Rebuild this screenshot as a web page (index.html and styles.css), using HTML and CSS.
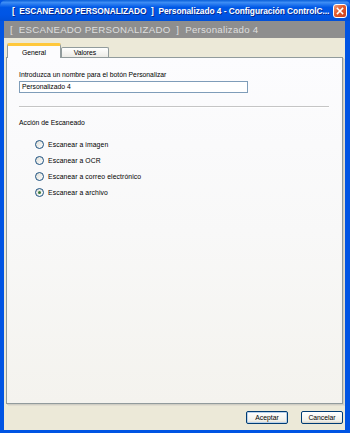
FILE: index.html
```html
<!DOCTYPE html>
<html lang="es">
<head>
<meta charset="utf-8">
<title>Configuración</title>
<link rel="stylesheet" href="styles.css">
</head>
<body>
<div class="window">
  <div class="titlebar">
    <span class="title">[&nbsp; ESCANEADO PERSONALIZADO &nbsp;]&nbsp; Personalizado 4 - Configuración ControlC...</span>
    <span class="close"><svg width="14" height="14" viewBox="0 0 14 14"><path d="M4 4 L10 10 M10 4 L4 10" stroke="#fff" stroke-width="1.8" stroke-linecap="square"/></svg></span>
  </div>
  <div class="frame">
    <div class="header">[&nbsp; ESCANEADO PERSONALIZADO &nbsp;]&nbsp; Personalizado 4</div>
    <div class="body">
      <div class="tabs">
        <div class="tab active">General</div>
        <div class="tab">Valores</div>
      </div>
      <div class="panel">
        <div class="label">Introduzca un nombre para el botón Personalizar</div>
        <div class="input">Personalizado 4</div>
        <div class="sep"></div>
        <div class="label group">Acción de Escaneado</div>
        <div class="radios">
          <div class="radio"><span class="dot"></span>Escanear a imagen</div>
          <div class="radio"><span class="dot"></span>Escanear a OCR</div>
          <div class="radio"><span class="dot"></span>Escanear a correo electrónico</div>
          <div class="radio"><span class="dot on"></span>Escanear a archivo</div>
        </div>
      </div>
      <div class="buttons">
        <div class="btn">Aceptar</div>
        <div class="btn">Cancelar</div>
      </div>
    </div>
  </div>
</div>
</body>
</html>
```
FILE: styles.css
```css
html, body { margin: 0; padding: 0; }
body { width: 350px; height: 433px; overflow: hidden; font-family: "Liberation Sans", Arial, sans-serif; }
.window { width: 350px; height: 433px; display: flex; flex-direction: column; background: #0054e3; }
.titlebar {
  height: 21px; flex: none; display: flex; align-items: center; justify-content: space-between;
  padding: 0 3px 0 12px;
  background: linear-gradient(to bottom, #0a5fd8 0%, #3d8df5 12%, #0058e6 35%, #0055e5 70%, #0050d8 100%);
  border-radius: 6px 6px 0 0;
}
.title { color: #fff; font-weight: bold; font-size: 8.4px; letter-spacing: -0.05px; white-space: nowrap; text-shadow: 1px 1px 0 #0a2a8a; }
.close {
  width: 14px; height: 14px; border: 1px solid #fff; border-radius: 3px; box-sizing: border-box;
  background: linear-gradient(135deg, #f0a080 0%, #e25a2c 45%, #c8401e 100%);
  display: flex; align-items: center; justify-content: center;
}
.close svg { display: block; width: 12px; height: 12px; }
.frame { flex: 1; margin: 0 5px 3px 4px; display: flex; flex-direction: column; background: #ece9d8; }
.header {
  height: 17px; flex: none; background: #8e8e8e; color: #dedede; font-size: 9.7px;
  padding-left: 6px; display: flex; align-items: center; white-space: nowrap; letter-spacing: 0.25px;
}
.body { flex: 1; display: flex; flex-direction: column; padding: 5px 2px 0 2px; }
.tabs { display: flex; align-items: flex-end; height: 14px; padding-left: 1px; position: relative; z-index: 1; }
.tab {
  font-size: 6.8px; color: #000; box-sizing: border-box; display: flex; align-items: center; justify-content: center;
  border: 1px solid #919b9c; border-bottom: none; border-radius: 2px 2px 0 0;
}
.tab.active {
  width: 54px; height: 15px; margin-bottom: -1px; background: #fcfcfe;
  border-top: 3px solid #ffc83c; padding-top: 0;
}
.tab:not(.active) {
  width: 48px; height: 10px; background: linear-gradient(to bottom, #fff, #ecebe6);
}
.panel {
  height: 347px; box-sizing: border-box; border: 1px solid #919b9c;
  background: linear-gradient(to bottom, #fcfcfe 0%, #f8f8f8 50%, #f4f3ee 100%);
  box-shadow: 1px 1px 0 #d0cec4, 2px 2px 0 #e0ddd0;
  padding: 12px 12px 0 12px; display: flex; flex-direction: column;
}
.label { font-size: 6.8px; color: #000; line-height: 9px; }
.input {
  margin-top: 2px; width: 229px; height: 12px; box-sizing: border-box; border: 1px solid #7f9db9; background: #fff;
  font-size: 6.8px; line-height: 10px; padding-left: 2px;
}
.sep { margin-top: 13px; height: 1px; background: #c5c5c5; width: 310px; border-bottom: 1px solid #fff; }
.group { margin-top: 10px; }
.radios { display: flex; flex-direction: column; padding-left: 16px; margin-top: 13px; gap: 7px; }
.radio { display: flex; align-items: center; font-size: 6.8px; height: 9px; letter-spacing: 0.1px; }
.dot {
  width: 9px; height: 9px; border-radius: 50%; box-sizing: border-box; border: 1px solid #1c5180;
  background: linear-gradient(135deg, #dcdcd5, #fff); margin-right: 4px; position: relative;
}
.dot.on::after {
  content: ""; position: absolute; left: 2px; top: 2px; width: 3px; height: 3px; border-radius: 50%;
  background: #3c7a3c;
}
.buttons { display: flex; justify-content: flex-end; gap: 13px; margin-top: 7px; padding-right: 0; }
.btn {
  width: 42px; height: 13px; box-sizing: border-box; border: 1px solid #003c74; border-radius: 2px;
  background: linear-gradient(to bottom, #fff, #f0f0ea 80%, #d6d0c5);
  font-size: 6.8px; display: flex; align-items: center; justify-content: center;
}
.btn:first-child { box-shadow: inset 0 0 0 1px #b9d1ea; }
```
